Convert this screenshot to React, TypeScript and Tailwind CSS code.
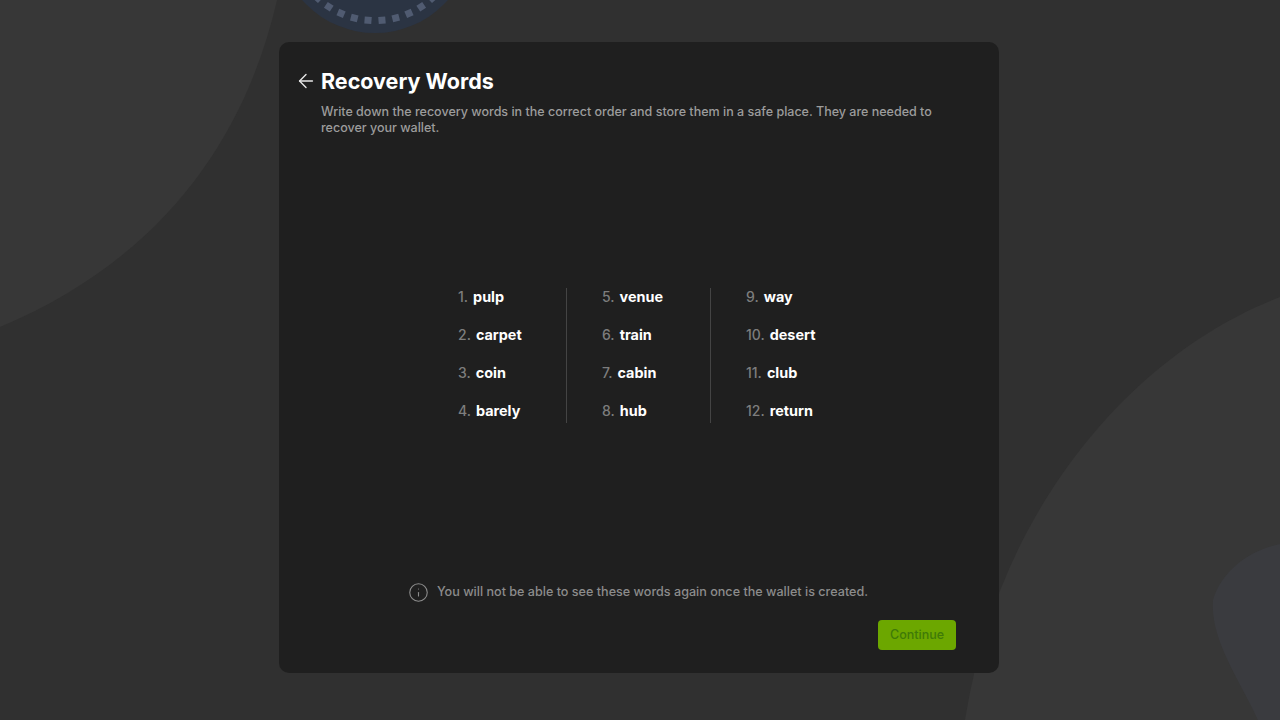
import { ArrowLeft, Info } from 'lucide-react';

const columns = [
  [['1.', 'pulp'], ['2.', 'carpet'], ['3.', 'coin'], ['4.', 'barely']],
  [['5.', 'venue'], ['6.', 'train'], ['7.', 'cabin'], ['8.', 'hub']],
  [['9.', 'way'], ['10.', 'desert'], ['11.', 'club'], ['12.', 'return']],
];

function Backdrop() {
  const dots = Array.from({ length: 38 }, (_, i) => {
    const a = ((i + 0.5) * 360) / 38;
    return <rect key={i} x="371.5" y="17" width="7" height="7" fill="#505b71" transform={`rotate(${a} 375 -64)`} />;
  });
  return (
    <svg className="absolute inset-0 w-full h-full" viewBox="0 0 1280 720">
      <path d="M0 0H277C245 140 160 260 0 327Z" fill="#373737" />
      <path d="M1280 297C1140 350 1000 500 965 720H1280Z" fill="#373737" />
      <path d="M1280 544C1250 550 1222 570 1213 600C1210 640 1240 680 1258 720H1280Z" fill="#3a3b3f" />
      <circle cx="375" cy="-64" r="97" fill="#2b3443" />
      {dots}
    </svg>
  );
}

export default function App() {
  return (
    <div className="relative w-[1280px] h-[720px] overflow-hidden bg-[#303030] font-['Inter',sans-serif]">
      <Backdrop />
      <div className="relative ml-[279px] mr-[281px] pt-[42px]">
        <main className="h-[631px] flex flex-col rounded-[10px] bg-[#1f1f1f] pl-[20px] pr-[43px] pt-[27px] pb-[23px]">
          <header className="flex items-center gap-[4px] h-[24px] -ml-[4px]">
            <ArrowLeft className="w-[22px] h-[22px] text-[#e8e8e8]" strokeWidth={1.5} />
            <h1 className="text-[21.5px] font-bold leading-[24px] text-white">Recovery Words</h1>
          </header>
          <p className="mt-[11px] ml-[22px] text-[12.52px] leading-[16px] font-medium text-[#9c9c9c]">
            Write down the recovery words in the correct order and store them in a safe place. They are needed to recover your wallet.
          </p>

          <div className="flex flex-1 justify-center items-center">
            <div className="flex pl-[58px] -mt-[8px]">
              {columns.map((col, i) => (
                <div
                  key={i}
                  className={`h-[135px] ${i === 0 ? 'w-[109px]' : 'w-[144px] pl-[35px]'} ${i < 2 ? 'border-r border-[#444444]' : ''}`}
                >
                  <div className="flex flex-col gap-[18px] -mt-[1px]">
                    {col.map(([num, word]) => (
                      <div key={num} className="flex items-center gap-[5px] h-[20px] text-[14px]">
                        <span className="text-[#7d7d7d] font-medium">{num}</span>
                        <span className="text-[14.4px] text-white font-bold">{word}</span>
                      </div>
                    ))}
                  </div>
                </div>
              ))}
            </div>
          </div>

          <div className="flex items-center justify-center gap-[8px] h-[20px] pl-[21px]">
            <Info className="w-[21px] h-[21px] text-[#8c8c8c]" strokeWidth={1.25} />
            <span className="text-[12.6px] font-medium text-[#8c8c8c]">
              You will not be able to see these words again once the wallet is created.
            </span>
          </div>

          <div className="flex justify-end mt-[18px]">
            <button className="w-[78px] h-[30px] rounded-[4px] bg-[#6ca700] text-[12.5px] font-medium text-[#3f7a08]">
              Continue
            </button>
          </div>
        </main>
      </div>
    </div>
  );
}
